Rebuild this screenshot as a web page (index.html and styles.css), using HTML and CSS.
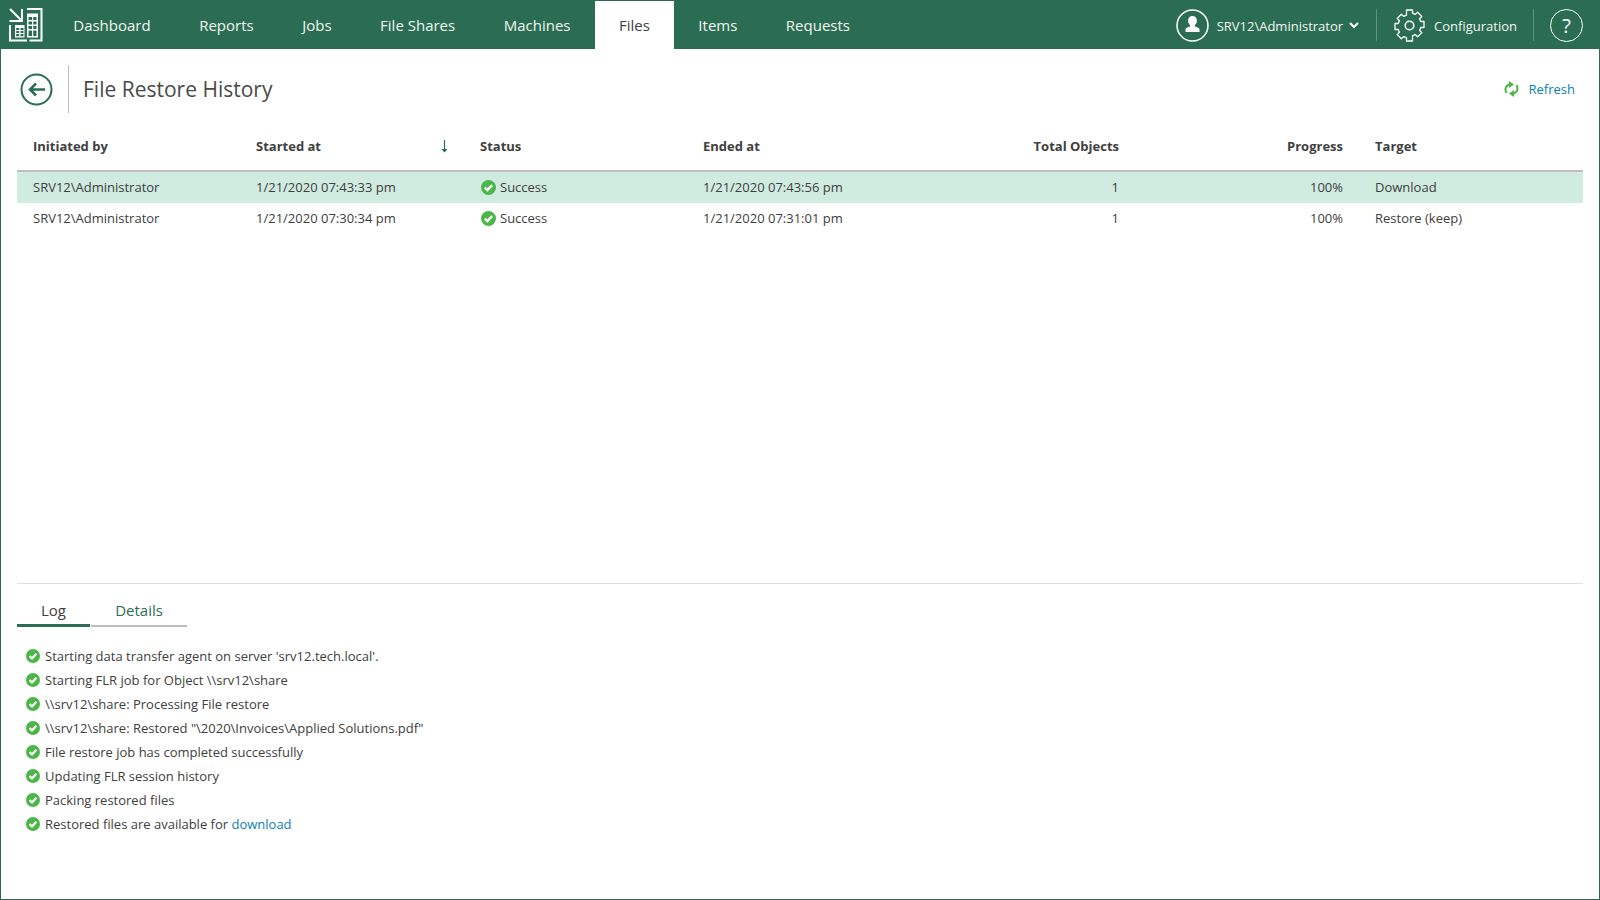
FILE: index.html
```html
<!DOCTYPE html>
<html lang="en">
<head>
<meta charset="utf-8">
<title>File Restore History</title>
<link rel="stylesheet" href="styles.css">
</head>
<body>
<svg class="defs" width="0" height="0" aria-hidden="true">
  <symbol id="ok" viewBox="0 0 14 14">
    <circle cx="7" cy="7" r="7" fill="#4cb648"/>
    <path d="M3.600 7.100 6 9.500l4.400-4.700" fill="none" stroke="#fff" stroke-width="2.200"/>
  </symbol>
</svg>
<div class="app">
  <header class="topbar">
    <svg class="logo" width="34" height="34" viewBox="0 0 34 34">
      <g fill="none" stroke="#fff" stroke-width="2">
        <path d="M1 1 12.500 12.500M13 1v12H.5"/>
        <path d="M1 17v15.500h17M18 1h14.500v31.500H20.500"/>
      </g>
      <path fill="#fff" fill-rule="evenodd" d="M6 17h9.500v12.500H6zM7.200 20v2h3v-2zm4.300 0v2h3v-2zM7.200 23v2h3v-2zm4.300 0v2h3v-2zM7.200 26v2.200h3V26zm4.300 0v2.200h3V26z"/>
      <path fill="#fff" fill-rule="evenodd" d="M18 5.500h11V29.500H18zM19.500 9v3h3.500V9zm4.700 0v3h3.300V9zM19.500 13.500v3h3.500v-3zm4.700 0v3h3.300v-3zM19.500 18v3h3.500v-3zm4.700 0v3h3.300v-3zM19.500 22.500v5.500h3.500v-5.500zm4.700 0v5.500h3.300v-5.500z"/>
    </svg>
    <nav class="nav">
      <a class="nav-item">Dashboard</a>
      <a class="nav-item">Reports</a>
      <a class="nav-item">Jobs</a>
      <a class="nav-item">File Shares</a>
      <a class="nav-item">Machines</a>
      <a class="nav-item active">Files</a>
      <a class="nav-item">Items</a>
      <a class="nav-item">Requests</a>
    </nav>
    <div class="tools">
      <div class="tool user">
        <svg width="33" height="33" viewBox="0 0 33 33">
          <circle cx="16.500" cy="16.500" r="15.500" fill="none" stroke="#fff" stroke-width="1.500"/>
          <path fill="#fff" d="M16.500 7c2.600 0 4.400 2 4.400 4.700 0 1.900-.9 3.500-1.900 4.400v1.300c1.900.7 3.700 1.200 4.500 2.500V23H9.500v-3.100c.8-1.300 2.600-1.800 4.500-2.500v-1.300c-1-.9-1.900-2.500-1.900-4.400C12.100 9 13.900 7 16.500 7z"/>
        </svg>
        <span class="tool-text">SRV12\Administrator</span>
        <svg class="chev" width="10" height="7" viewBox="0 0 10 7"><path d="M1 1l4 4 4-4" fill="none" stroke="#fff" stroke-width="2"/></svg>
      </div>
      <div class="tool config">
        <svg width="33" height="33" viewBox="0 0 33 33">
          <path fill="none" stroke="#fff" stroke-width="1.300" stroke-linejoin="round" d="M13.500 1h6v3.200l2.800 1.200 2.300-2.200 4.200 4.200-2.200 2.300 1.200 2.800H31v6h-3.200l-1.200 2.800 2.200 2.300-4.200 4.200-2.300-2.200-2.800 1.200V32h-6v-3.200l-2.800-1.200-2.300 2.200-4.200-4.200 2.200-2.300-1.200-2.800H2v-6h3.200l1.200-2.800-2.200-2.300 4.200-4.200 2.300 2.200 2.800-1.200z"/>
          <circle cx="16.500" cy="16.500" r="4.300" fill="none" stroke="#fff" stroke-width="1.500"/>
        </svg>
        <span class="tool-text">Configuration</span>
      </div>
      <div class="tool help">
        <span class="help-circle">?</span>
      </div>
    </div>
  </header>

  <main class="content">
    <div class="page-head">
      <svg class="back" width="33" height="33" viewBox="0 0 33 33">
        <circle cx="16.500" cy="16.500" r="15" fill="none" stroke="#2b6d52" stroke-width="2"/>
        <path d="M25 16.500H10M16 10.500l-6 6 6 6" fill="none" stroke="#2b6d52" stroke-width="2.500"/>
      </svg>
      <h1 class="title">File Restore History</h1>
      <a class="refresh">
        <svg width="15" height="16" viewBox="0 0 15 16">
          <g fill="none" stroke="#4cb648" stroke-width="2">
            <path d="M2.500 12C.5 8.500 1.500 4.300 6 3.400"/>
            <path d="M12.500 4c2 3.500 1 7.700-3.500 8.600"/>
          </g>
          <path fill="#4cb648" d="M5 0l5 3.500L5 7zM10 9l-5 3.500L10 16z"/>
        </svg>
        Refresh
      </a>
    </div>

    <div class="table">
      <div class="row head">
        <span class="cell">Initiated by</span>
        <span class="cell sort">Started at
          <svg class="sort-arrow" width="9" height="13" viewBox="0 0 9 13"><path d="M4.500 0v10" fill="none" stroke="#2b6d52" stroke-width="1.200"/><path d="M1.500 9h6l-3 3.500z" fill="#2b6d52"/></svg>
        </span>
        <span class="cell">Status</span>
        <span class="cell">Ended at</span>
        <span class="cell num">Total Objects</span>
        <span class="cell num">Progress</span>
        <span class="cell">Target</span>
      </div>
      <div class="row selected">
        <span class="cell">SRV12\Administrator</span>
        <span class="cell">1/21/2020 07:43:33 pm</span>
        <span class="cell status"><svg class="ok"><use href="#ok"/></svg>Success</span>
        <span class="cell">1/21/2020 07:43:56 pm</span>
        <span class="cell num">1</span>
        <span class="cell num">100%</span>
        <span class="cell">Download</span>
      </div>
      <div class="row">
        <span class="cell">SRV12\Administrator</span>
        <span class="cell">1/21/2020 07:30:34 pm</span>
        <span class="cell status"><svg class="ok"><use href="#ok"/></svg>Success</span>
        <span class="cell">1/21/2020 07:31:01 pm</span>
        <span class="cell num">1</span>
        <span class="cell num">100%</span>
        <span class="cell">Restore (keep)</span>
      </div>
    </div>

    <section class="panel">
      <div class="tabs">
        <span class="tab active">Log</span>
        <span class="tab">Details</span>
      </div>
      <ul class="log">
        <li><svg class="ok"><use href="#ok"/></svg>Starting data transfer agent on server 'srv12.tech.local'.</li>
        <li><svg class="ok"><use href="#ok"/></svg>Starting FLR job for Object \\srv12\share</li>
        <li><svg class="ok"><use href="#ok"/></svg>\\srv12\share: Processing File restore</li>
        <li><svg class="ok"><use href="#ok"/></svg>\\srv12\share: Restored "\2020\Invoices\Applied Solutions.pdf"</li>
        <li><svg class="ok"><use href="#ok"/></svg>File restore job has completed successfully</li>
        <li><svg class="ok"><use href="#ok"/></svg>Updating FLR session history</li>
        <li><svg class="ok"><use href="#ok"/></svg>Packing restored files</li>
        <li><svg class="ok"><use href="#ok"/></svg><span>Restored files are available for <a class="link">download</a></span></li>
      </ul>
    </section>
  </main>
</div>
</body>
</html>
```
FILE: styles.css
```css
* { box-sizing: border-box; }
html, body { margin: 0; height: 100%; }
body {
  font-family: "Open Sans", "Liberation Sans", sans-serif;
  font-size: 13px;
  color: #404040;
  background: #fff;
  overflow: hidden;
}
.defs { display: block; height: 0; }
.app {
  width: 1600px;
  height: 900px;
  display: flex;
  flex-direction: column;
  border: 1px solid #2b6d52;
  border-top: 0;
}
.topbar {
  height: 49px;
  flex: none;
  background: #2b6d52;
  color: #fff;
  display: flex;
  align-items: stretch;
}
.logo { margin: 8px 0 0 8px; flex: none; }
.nav { display: flex; margin-left: 6px; padding-top: 1px; }
.nav-item {
  padding: 0 24.250px;
  font-size: 15px;
  line-height: 48px;
  color: #f1f6f3;
}
.nav-item.active { background: #fff; color: #404040; }
.tools { margin-left: auto; display: flex; align-items: center; padding-top: 1px; }
.tool { display: flex; align-items: center; height: 32px; }
.tool-text { font-size: 13px; color: #f1f6f3; padding-top: 1px; }
.user { gap: 8px; padding-right: 17px; }
.chev { margin: 1px 0 0 -2px; }
.config { gap: 8px; padding: 0 16px; border-left: 1px solid #5f917c; border-right: 1px solid #5f917c; }
.help { padding: 0 16px; }
.help-circle {
  width: 33px;
  height: 33px;
  border: 1.500px solid #fff;
  border-radius: 50%;
  display: flex;
  align-items: center;
  justify-content: center;
  font-size: 20px;
}
.content { flex: 1; display: flex; flex-direction: column; padding: 0 16px; min-height: 0; }
.page-head { display: flex; align-items: center; height: 48px; margin-top: 16px; padding-left: 3px; }
.back { flex: none; }
.title {
  margin: 0 0 0 15px;
  padding-left: 14px;
  border-left: 1px solid #bdbdbd;
  height: 48px;
  line-height: 49px;
  font-size: 21px;
  font-weight: 400;
  color: #4a4a4a;
}
.refresh { margin-left: auto; margin-right: 8px; display: flex; align-items: center; gap: 10px; color: #0a7fb5; }
.table { flex: 1; margin-top: 9px; }
.row {
  display: grid;
  grid-template-columns: 223px 224px 223px 224px 224px 224px 225px;
  height: 31px;
  align-items: center;
  padding-bottom: 2px;
}
.cell { padding: 0 16px; white-space: nowrap; }
.num { text-align: right; }
.head { height: 50px; font-weight: 700; padding-bottom: 1px; border-bottom: 2px solid #c0c0c0; }
.sort { display: flex; justify-content: space-between; align-items: center; padding-right: 15px; }
.sort-arrow { margin-top: 2px; }
.selected { background: #d0ebe0; }
.status { display: flex; align-items: center; gap: 4px; padding-left: 17px; }
.status .ok { width: 15px; height: 15px; margin-top: 1px; }
.ok { width: 14px; height: 14px; flex: none; }
.panel { flex: none; height: 316px; border-top: 1px solid #dedede; }
.tabs { display: flex; margin-top: 14px; }
.tab {
  width: 96px;
  height: 29px;
  font-size: 15px;
  line-height: 24px;
  text-align: center;
  color: #2b6d52;
  border-bottom: 2px solid #bdbdbd;
}
.tab.active { width: 73px; color: #404040; border-bottom: 3px solid #2b6d52; margin-right: 1px; }
.log { list-style: none; margin: 17px 0 0; padding: 0 0 0 9px; }
.log li { display: flex; align-items: center; gap: 5px; height: 24px; }
.link { color: #0a7fb5; }
```
